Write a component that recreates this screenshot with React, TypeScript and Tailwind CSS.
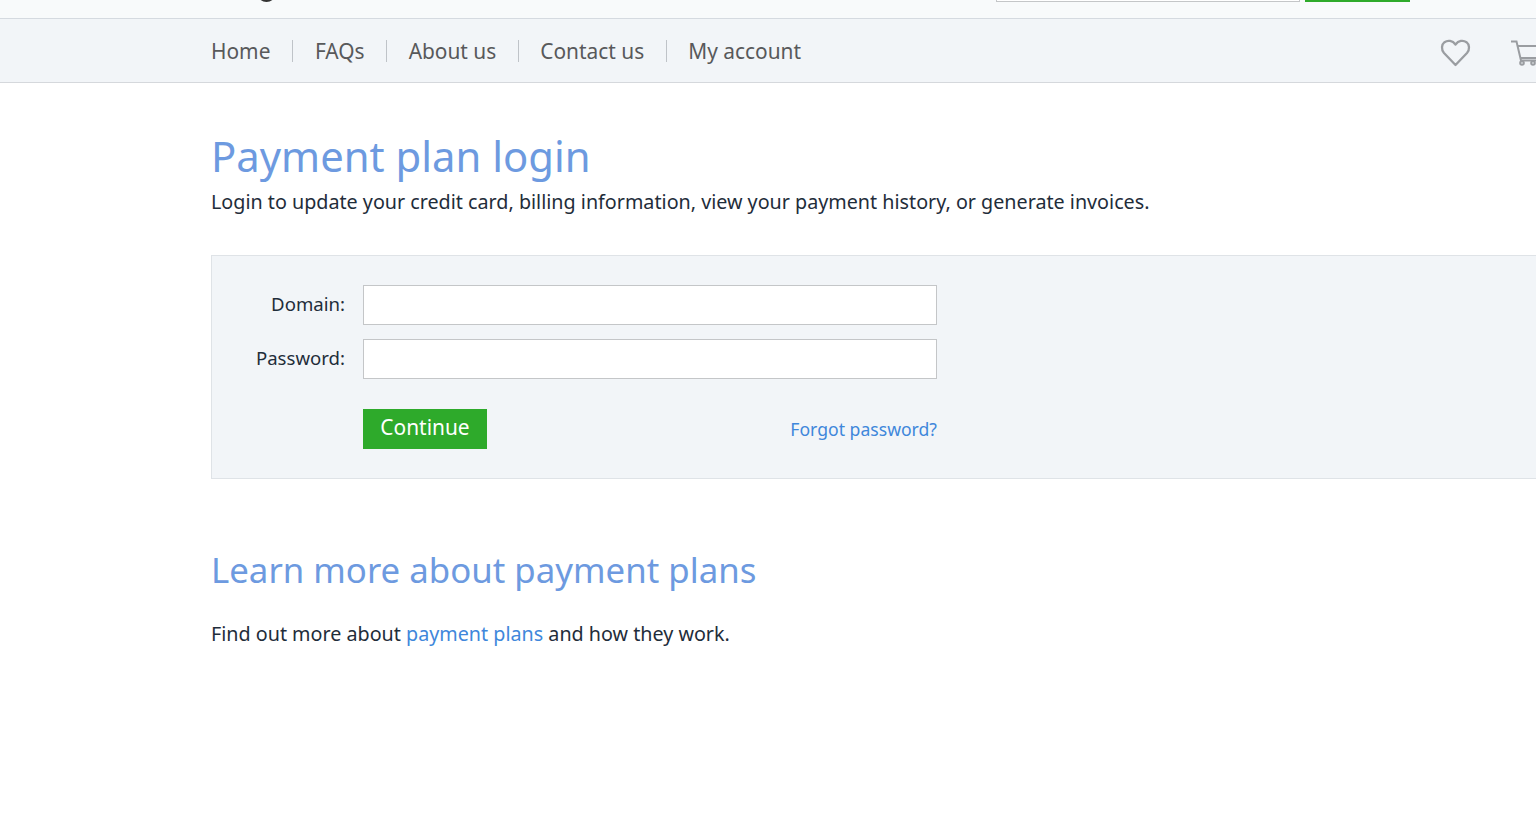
import React from "react";

const navItems = ["Home", "FAQs", "About us", "Contact us", "My account"];

export default function App() {
  return (
    <div className="h-[834px] w-[1536px] overflow-hidden bg-white font-['Noto_Sans',sans-serif] text-[#1f2d3a]">
      <header className="relative h-[19px] border-b border-[#d5dae0] bg-[#f8fafb]">
        <div className="absolute left-[257px] top-[-6px] h-[8px] w-[19px] overflow-hidden">
          <div className="mt-[-6px] h-[14px] w-[19px] rounded-b-full border-b-[3px] border-[#333]" />
        </div>
        <div className="absolute left-[996px] top-[-10px] h-[12px] w-[304px] border border-[#c4c6c8] bg-white" />
        <div className="absolute left-[1305px] top-[-10px] h-[12px] w-[105px] bg-[#2eaa2b]" />
      </header>

      <nav className="flex h-[64px] items-center justify-between border-b border-[#d5d8dc] bg-[#f2f5f8] pl-[211px]">
        <ul className="flex items-center text-[20.9px] leading-[22px] text-[#58595b]">
          {navItems.map((item, i) => (
            <li
              key={item}
              className={
                i === navItems.length - 1
                  ? "pl-[21.5px]"
                  : i === 0
                    ? "border-r border-[#bfc3c8] pr-[22px]"
                    : "border-r border-[#bfc3c8] px-[21.5px]"
              }
            >
              {item}
            </li>
          ))}
        </ul>
        <div className="flex shrink-0 items-center gap-[40px]">
          <svg className="overflow-visible" width="30" height="28" viewBox="0 0 30 28" fill="none" stroke="#9a9da1" strokeWidth="2.3" strokeLinejoin="round">
            <path d="M14.500 28 3 16C0 12.500.5 7.500 3.500 5.200 6.800 2.800 11.500 3.500 14.500 7.500 17.500 3.500 22.200 2.800 25.500 5.200 28.500 7.500 29 12.500 26 16Z" />
          </svg>
          <svg className="mr-[-11px] overflow-visible" width="36" height="28" viewBox="0 0 36 28" fill="none" stroke="#9a9da1" strokeWidth="2">
            <path d="M0 4.500H5.500L10 23.500H36" />
            <path d="M6.500 9H36M9 21H36" strokeWidth="1.800" />
            <circle cx="11" cy="26" r="1.800" />
            <circle cx="22" cy="26" r="1.800" />
          </svg>
        </div>
      </nav>

      <main className="w-[1536px] pl-[211px]">
        <h1 className="mt-[46px] text-[41.8px] leading-[54px] font-normal text-[#6d9ae0]">Payment plan login</h1>
        <p className="mt-[6px] text-[19.73px] leading-[26px]">
          Login to update your credit card, billing information, view your payment history, or generate invoices.
        </p>

        <section className="mt-[40px] h-[224px] w-[1340px] border border-[#dfe3e7] bg-[#f2f5f8] pt-[29px]">
          <div className="flex w-[725px] flex-col gap-[14px]">
            <label className="flex items-center">
              <span className="w-[133px] pb-[3px] text-right text-[18.600px]">Domain:</span>
              <input className="ml-[18px] h-[40px] w-[574px] border border-[#c4c6c8] bg-white" />
            </label>
            <label className="flex items-center">
              <span className="w-[133px] pb-[3px] text-right text-[18.600px]">Password:</span>
              <input type="password" className="ml-[18px] h-[40px] w-[574px] border border-[#c4c6c8] bg-white" />
            </label>
          </div>
          <div className="mt-[30px] ml-[151px] flex w-[574px] items-center justify-between">
            <button className="h-[40px] w-[124px] bg-[#2eaa2b] pb-[3px] text-[20.9px] text-white">Continue</button>
            <a className="text-[17.600px] text-[#3f87db]">Forgot password?</a>
          </div>
        </section>

        <h2 className="mt-[68px] text-[34.8px] leading-[46px] font-normal text-[#6d9ae0]">Learn more about payment plans</h2>
        <p className="mt-[28px] text-[19.73px] leading-[26px]">
          Find out more about <a className="text-[#3f87db]">payment plans</a> and how they work.
        </p>
      </main>
    </div>
  );
}
